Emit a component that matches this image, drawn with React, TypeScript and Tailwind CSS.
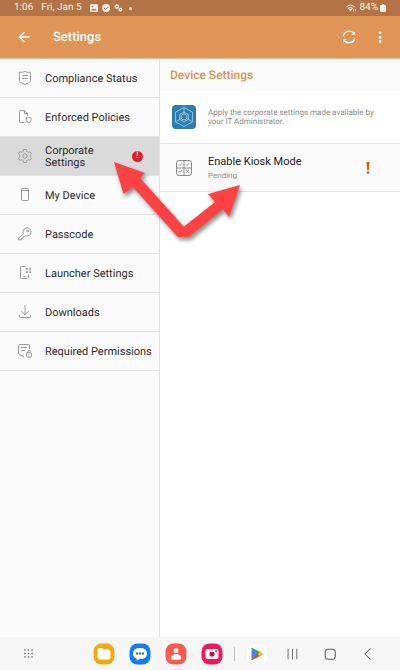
import type { ReactNode } from "react";

function Icon({ children, className = "size-4" }: { children: ReactNode; className?: string }) {
  return (
    <svg
      viewBox="0 0 16 16"
      fill="none"
      stroke="currentColor"
      strokeLinecap="round"
      strokeLinejoin="round"
      aria-hidden="true"
      className={`shrink-0 ${className}`}
    >
      {children}
    </svg>
  );
}

const ShieldIcon = (
  <Icon>
    <path d="M2.5 2.2Q5.5 2.8 8 1.5Q10.5 2.8 13.5 2.2V10.5Q13.5 11.8 12.3 12.4L8 14.5L3.7 12.4Q2.5 11.8 2.5 10.5Z" />
    <path d="M5.5 5.5h5M5.5 8.5h5" />
  </Icon>
);

const PolicyIcon = (
  <Icon>
    <path d="M7 13.5H3.5Q2.5 13.5 2.5 12.5V2.5Q2.5 1.5 3.5 1.5H7.5L10.5 4.5V6.5M7.5 1.5V4.5H10.5" />
    <path d="M9.5 8.7Q11 8.8 11.8 8.3Q12.6 8.8 14 8.7V11.5Q14 12.7 11.8 13.7Q9.5 12.7 9.5 11.500Z" />
  </Icon>
);

const GearIcon = (
  <Icon>
    <path d="M6.7 1.5H9.3L9.8 3.4L11.3 4.3L13.2 3.7L14.5 6L13.1 7.3V8.7L14.5 10L13.2 12.3L11.3 11.7L9.8 12.6L9.3 14.5H6.7L6.2 12.6L4.7 11.7L2.8 12.3L1.5 10L2.9 8.7V7.3L1.5 6L2.8 3.7L4.7 4.3L6.2 3.4Z" />
    <circle cx="8" cy="8" r="2.2" />
  </Icon>
);

const DeviceIcon = (
  <Icon>
    <rect x="4.5" y="1.5" width="7" height="12" rx="0.8" />
    <path d="M4.500 3.500h7" />
  </Icon>
);

const KeyIcon = (
  <Icon>
    <path d="M6.3 7.8A4.1 4.1 0 1 1 8.6 9.8L7.5 10.800H6V12.300H4.500V13.800H1.500V12.2Z" />
    <circle cx="10.800" cy="5" r="0.9" />
  </Icon>
);

const LauncherIcon = (
  <Icon>
    <path d="M8 1.5H4.5Q3.5 1.5 3.5 2.5V12.5Q3.5 13.5 4.5 13.5H10.5Q11.5 13.5 11.5 12.5V10M6.8 11.5h1.2" />
    <path d="M9 3h1.8v1.8H9zM12.2 3H14v1.8h-1.8zM9 6.2h1.8V8H9zM12.2 6.2H14V8h-1.8z" fill="currentColor" stroke="none" />
  </Icon>
);

const DownloadIcon = (
  <Icon>
    <path d="M8 1.5V10.5M4.5 7.3L8 10.7L11.5 7.3M2.500 11.500V12.500Q2.500 13.500 3.500 13.500H12.500Q13.500 13.500 13.500 12.500V11.500" />
  </Icon>
);

const PermissionIcon = (
  <Icon>
    <path d="M12.500 6V2.500Q12.500 1.500 11.500 1.500H2.500Q1.500 1.500 1.500 2.500V10Q1.500 11 2.400 11.500L6.500 13.500M4 4.500h5.500M4 7.500h3.500" />
    <rect x="9.500" y="9.800" width="5" height="4.200" rx="0.600" />
    <path d="M10.700 9.800V8.700Q10.700 7.500 12 7.500Q13.300 7.500 13.300 8.700V9.800M12 11.600v.6" />
  </Icon>
);

const menu = [
  { label: "Compliance Status", icon: ShieldIcon },
  { label: "Enforced Policies", icon: PolicyIcon },
  { label: "Corporate Settings", icon: GearIcon, active: true },
  { label: "My Device", icon: DeviceIcon },
  { label: "Passcode", icon: KeyIcon },
  { label: "Launcher Settings", icon: LauncherIcon },
  { label: "Downloads", icon: DownloadIcon },
  { label: "Required Permissions", icon: PermissionIcon },
];

function StatusBar() {
  return (
    <div className="flex h-4 items-center justify-between bg-[#b27446] pl-3.5 pr-3.5 text-[10px] leading-4 text-[#fbeee2]">
      <div className="flex items-center">
        <span>1:06</span>
        <span className="ml-2">Fri, Jan 5</span>
        <svg viewBox="0 0 8 8" className="ml-2 size-2" aria-hidden="true">
          <rect width="8" height="8" rx="1.5" fill="currentColor" />
          <path d="M1.2 6.6L3 4.2L4.3 5.6L5.4 4.6L6.8 6.6Z" fill="#b27446" />
          <circle cx="2.7" cy="2.5" r="0.8" fill="#b27446" />
        </svg>
        <svg viewBox="0 0 8 8" className="ml-1 size-2" aria-hidden="true">
          <circle cx="4" cy="4" r="4" fill="currentColor" />
          <path d="M2 4L3.5 5.5L6.1 2.7" fill="none" stroke="#b27446" />
        </svg>
        <svg viewBox="0 0 9 8" className="ml-1 h-2 w-[9px]" fill="none" stroke="currentColor" strokeWidth="1.3" aria-hidden="true">
          <circle cx="2.8" cy="2.6" r="1.6" />
          <circle cx="6.4" cy="5.6" r="1.3" />
        </svg>
        <span className="ml-1.5 size-[3px] rounded-full bg-current" />
      </div>
      <div className="flex items-center">
        <svg viewBox="0 0 11 8" className="h-2 w-[11px]" fill="none" stroke="currentColor" strokeLinecap="round" aria-hidden="true">
          <path d="M.8 2.600Q4.500 -.9 8.200 2.600M2.200 4.200Q4.500 2.200 6.800 4.200" />
          <path d="M3.500 5.500L4.500 6.800L5.500 5.500Z" fill="currentColor" />
          <path d="M7.500 5.500v1.500M9.500 5.500v1.500" />
        </svg>
        <span className="ml-0.5">84%</span>
        <svg viewBox="0 0 6 8" className="ml-0.5 h-2 w-1.5" fill="currentColor" aria-hidden="true">
          <path d="M2 0h2v1h1q1 0 1 1v5q0 1-1 1H1q-1 0-1-1V2q0-1 1-1h1z" />
        </svg>
      </div>
    </div>
  );
}

function AppBar() {
  return (
    <header className="flex h-[43px] items-center border-b border-[#e6bb95] bg-[#e09455] pl-4 pr-3 text-white">
      <button type="button" aria-label="Back">
        <Icon>
          <path d="M13 8H4M8 3.500L3.500 8L8 12.500" strokeWidth="1.500" />
        </Icon>
      </button>
      <h1 className="ml-[21px] flex-1 pt-0.5 text-[13px] font-medium leading-4">Settings</h1>
      <button type="button" aria-label="Refresh">
        <Icon>
          <path d="M2.300 6.500A6 6 0 0 1 13 4.800M13.700 9.500A6 6 0 0 1 3 11.200" strokeWidth="1.300" />
          <path d="M13.800 2.500V6H10.300ZM2.200 13.500V10H5.700Z" fill="currentColor" stroke="none" />
        </Icon>
      </button>
      <button type="button" aria-label="More options" className="ml-[15px]">
        <Icon>
          <path d="M6.800 2.500h2.500V5H6.800zM6.800 7h2.500v2.500H6.800zM6.800 11.200h2.500v2.500H6.800z" fill="currentColor" stroke="none" />
        </Icon>
      </button>
    </header>
  );
}

function Sidebar() {
  return (
    <nav className="w-2/5 border-r border-[#e3e3e3] bg-[#fbfbfb]">
      {menu.map((item) => (
        <a
          key={item.label}
          href="#"
          aria-current={item.active ? "page" : undefined}
          className={`flex h-[39px] items-center border-b border-[#e2e2e2] pl-[17px] text-[11px] leading-3 text-[#2c2c2c] ${item.active ? "bg-[#dadada]" : ""}`}
        >
          <span className="text-[#9a9a9a]">{item.icon}</span>
          <span className={`ml-3 pt-0.5 ${item.active ? "w-20 pr-4" : "whitespace-nowrap"}`}>{item.label}</span>
          {item.active && (
            <span className="ml-[7px] flex size-[11px] items-center justify-center rounded-full bg-[#dc1f2b] text-[9px] text-white">!</span>
          )}
        </a>
      ))}
    </nav>
  );
}

function DeviceSettings() {
  return (
    <main className="flex-1 bg-white">
      <h2 className="flex h-8 items-center bg-[#fbfbfb] pl-2.5 text-[12px] font-medium leading-4 text-[#dd9250]">
        Device Settings
      </h2>
      <div className="flex h-[53px] items-center border-b border-[#e6e6e6] pl-3">
        <svg viewBox="0 0 24 24" className="size-6 shrink-0" fill="none" stroke="#a5d3ec" strokeWidth="0.8" aria-hidden="true">
          <rect width="24" height="24" rx="4" fill="#2e7dae" stroke="none" />
          <path d="M12 2.500L20.500 7.200V16.800L12 21.500L3.500 16.800V7.200Z" />
          <path d="M12 7L16.300 9.500V14.500L12 17L7.700 14.500V9.500Z" />
          <circle cx="12" cy="12" r="3" />
          <path d="M12 2.500V9M3.500 16.800L9.400 13.500M20.500 16.800L14.600 13.500" />
        </svg>
        <p className="ml-3 w-[168px] text-[8px] leading-[9px] text-[#8c8c8c]">
          Apply the corporate settings made available by your IT Administrator.
        </p>
      </div>
      <button type="button" className="flex h-12 w-full items-center border-b border-[#e2e2e2] bg-[#fbfbfb] pl-4 pr-7 text-left">
        <Icon className="size-4 text-[#8c8c8c]">
          <rect x="0.5" y="0.5" width="15" height="15" rx="2.5" />
          <path d="M8 1v14M1 8h14" />
          <path d="M3.2 4.6l.9.9 1.6-1.9M10.3 4.6l.9.9 1.6-1.9M3.2 11.4l.9.9 1.6-1.9M10.6 10.6l1.8 1.8M12.4 10.6l-1.8 1.8" strokeWidth="0.9" />
        </Icon>
        <span className="ml-4 flex-1 pt-0.5">
          <span className="block text-[11px] leading-[14px] text-[#222]">Enable Kiosk Mode</span>
          <span className="block text-[8px] leading-[13px] text-[#8c8c8c]">Pending</span>
        </span>
        <svg viewBox="0 0 4 12" className="mr-0.5 h-3 w-1" fill="#dd5a13" aria-hidden="true">
          <path d="M.4 0h3.2L2.8 8.2H1.2z" />
          <circle cx="2" cy="10.6" r="1.4" />
        </svg>
      </button>
    </main>
  );
}

function Arrows() {
  return (
    <svg
      viewBox="0 0 140 90"
      className="pointer-events-none absolute left-[110px] top-[99px] h-[90px] w-[140px] drop-shadow-[2px_3px_2px_rgba(0,0,0,0.45)]"
      fill="#fc4242"
      aria-hidden="true"
    >
      <path d="M4 4L35 15L30 20L75 70Q78 73 75 77Q71 81 67 78L23 29L13.500 36Z" />
      <path d="M130 27L119 59L113 51L80 78Q75 81 71.500 77Q69 73 72 70L105 44L98 36Z" />
    </svg>
  );
}

function Dock() {
  return (
    <footer className="flex h-[33px] items-center bg-[#f6f6f6] pl-[22px] pr-[25px] text-[#5c5c5c]">
      <button type="button" aria-label="All apps">
        <svg viewBox="0 0 14 14" className="size-3.5" fill="currentColor" aria-hidden="true">
          {[3, 6.5, 10].map((y) => [3, 6.5, 10].map((x) => <circle key={`${x}-${y}`} cx={x} cy={y} r="0.8" />))}
        </svg>
      </button>
      <div className="ml-auto flex items-center gap-3.5">
        <button type="button" aria-label="My Files">
          <svg viewBox="0 0 22 22" className="size-[22px]" aria-hidden="true">
            <rect x="0.5" y="0.5" width="21" height="21" rx="8" fill="#f7a80b" />
            <path d="M4.5 7Q4.5 5 6.5 5H9.5L11 6.500H15.500Q17.500 6.500 17.500 8.500V14.500Q17.500 16.500 15.500 16.500H6.500Q4.500 16.500 4.500 14.500Z" fill="#fff" />
          </svg>
        </button>
        <button type="button" aria-label="Messages">
          <svg viewBox="0 0 22 22" className="size-[22px]" aria-hidden="true">
            <rect x="0.5" y="0.5" width="21" height="21" rx="8" fill="#147af5" />
            <path d="M11 5Q18 5 18 10.500T11 16Q9.500 16 8.300 17.500L7 15.200Q4 14 4 10.500Q4 5 11 5Z" fill="#fff" />
            <path d="M7 9.500h2v2H7zM10 9.500h2v2h-2zM13 9.500h2v2h-2z" fill="#2360b8" />
          </svg>
        </button>
        <button type="button" aria-label="Contacts">
          <svg viewBox="0 0 22 22" className="size-[22px]" aria-hidden="true">
            <rect x="0.5" y="0.5" width="21" height="21" rx="8" fill="#fb5a50" />
            <circle cx="11" cy="7.5" r="2.5" fill="#ffe9e5" />
            <path d="M5.800 14.500Q6.500 11 11 11T16.200 14.500Q16.200 17 11 17T5.800 14.500Z" fill="#fff" />
          </svg>
        </button>
        <button type="button" aria-label="Camera">
          <svg viewBox="0 0 22 22" className="size-[22px]" aria-hidden="true">
            <rect x="0.5" y="0.5" width="21" height="21" rx="8" fill="#f1195a" />
            <rect x="4.5" y="6" width="13" height="10" rx="2" fill="#fff" />
            <circle cx="11" cy="11" r="2.6" fill="#c81347" />
            <circle cx="15" cy="8.3" r="1" fill="#f1195a" />
          </svg>
        </button>
      </div>
      <span className="ml-[11px] h-3.5 w-px bg-[#bdbdbd]" />
      <button type="button" aria-label="Play Store" className="ml-3 flex size-5 items-center justify-center rounded-md bg-white">
        <svg viewBox="0 0 14 14" className="size-3.5" aria-hidden="true">
          <path d="M1.500 1V13L7.500 7Z" fill="#4285f4" />
          <path d="M1.500 .5L10 5L7.500 7.500L1.500 1.500Z" fill="#34a853" />
          <path d="M1.500 13.500L10 9L7.500 6.500L1.500 12.500Z" fill="#ea4335" />
          <path d="M10 4.800L13.500 7L10 9.200L7.500 7Z" fill="#fbbc04" />
        </svg>
      </button>
      <div className="ml-[18px] flex items-center gap-6">
        <button type="button" aria-label="Recent apps">
          <Icon className="size-3.5">
            <path d="M3.500 2.500v11M8.500 2.500v11M13.500 2.500v11" />
          </Icon>
        </button>
        <button type="button" aria-label="Home">
          <Icon className="size-3.5">
            <rect x="2.5" y="2.5" width="11.5" height="11.5" rx="3.5" strokeWidth="1.2" />
          </Icon>
        </button>
        <button type="button" aria-label="Navigate back">
          <Icon className="size-3.5">
            <path d="M10.500 2L4.500 8L10.500 14" strokeWidth="1.2" />
          </Icon>
        </button>
      </div>
    </footer>
  );
}

export default function App() {
  return (
    <div className="flex min-h-screen flex-col bg-white font-['Roboto',sans-serif] [text-rendering:geometricPrecision]">
      <StatusBar />
      <AppBar />
      <div className="relative flex flex-1">
        <Sidebar />
        <DeviceSettings />
        <Arrows />
      </div>
      <Dock />
    </div>
  );
}
